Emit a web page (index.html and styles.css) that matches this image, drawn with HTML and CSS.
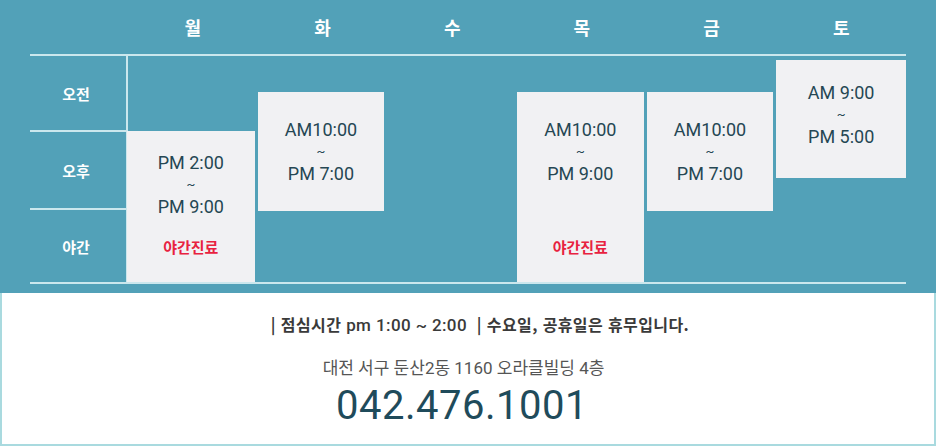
FILE: index.html
```html
<!DOCTYPE html>
<html lang="ko">

<head>
    <meta charset="UTF-8">
    <meta name="viewport" content="width=device-width, initial-scale=1.0">
    <title>진료시간 안내</title>
    <link rel="stylesheet" href="styles.css">
</head>

<body>
    <section class="timetable">
        <div class="days">
            <div></div>
            <div>월</div>
            <div>화</div>
            <div>수</div>
            <div>목</div>
            <div>금</div>
            <div>토</div>
        </div>

        <div class="grid">
            <div class="labels">
                <div class="label am">오전</div>
                <div class="label pm">오후</div>
                <div class="label night">야간</div>
            </div>

            <div class="day">
                <div class="slot mon">
                    <span>PM 2:00</span>
                    <span class="tilde">~</span>
                    <span>PM 9:00</span>
                    <span class="late">야간진료</span>
                </div>
            </div>
            <div class="day">
                <div class="slot tue">
                    <span>AM10:00</span>
                    <span class="tilde">~</span>
                    <span>PM 7:00</span>
                </div>
            </div>
            <div class="day"></div>
            <div class="day">
                <div class="slot thu">
                    <span>AM10:00</span>
                    <span class="tilde">~</span>
                    <span>PM 9:00</span>
                    <span class="late">야간진료</span>
                </div>
            </div>
            <div class="day">
                <div class="slot fri">
                    <span>AM10:00</span>
                    <span class="tilde">~</span>
                    <span>PM 7:00</span>
                </div>
            </div>
            <div class="day">
                <div class="slot sat">
                    <span>AM 9:00</span>
                    <span class="tilde">~</span>
                    <span>PM 5:00</span>
                </div>
            </div>
        </div>
    </section>

    <section class="info">
        <p class="notice">| 점심시간 <span class="time">pm 1:00 ~ 2:00</span> &nbsp;| 수요일, 공휴일은 휴무입니다.</p>
        <p class="address">대전 서구 둔산2동 1160 오라클빌딩 4층</p>
        <p class="phone">042.476.1001</p>
    </section>
</body>

</html>
```

FILE: styles.css
```css
body {
    margin: 0;
    padding: 0;
    font-family: Roboto, "Noto Sans CJK KR", sans-serif;
    background: #fff;
    color: #333;
}

.timetable {
    background: #52a1b8;
    padding: 0 30px 9px 30px;
}

.days,
.grid {
    display: grid;
    grid-template-columns: 98px repeat(6, 1fr);
}

.days {
    height: 54px;
    border-bottom: 2px solid #cbe7ed;
}

.days div {
    display: flex;
    align-items: center;
    justify-content: center;
    color: #fff;
    font-family: "Noto Sans CJK KR", sans-serif;
    font-weight: bold;
    font-size: 18px;
}

.grid {
    height: 226px;
    border-bottom: 2px solid #cbe7ed;
}

.labels {
    display: flex;
    flex-direction: column;
    border-right: 2px solid #cbe7ed;
}

.label {
    display: flex;
    align-items: center;
    justify-content: center;
    padding-right: 4px;
    color: #fff;
    font-family: "Noto Sans CJK KR", sans-serif;
    font-weight: bold;
    font-size: 15px;
}

.label.am {
    height: 74px;
    border-bottom: 2px solid #cbe7ed;
}

.label.pm {
    height: 76px;
    border-bottom: 2px solid #cbe7ed;
}

.label.night {
    flex: 1;
}

.day {
    display: flex;
    flex-direction: column;
}

.slot {
    display: flex;
    flex-direction: column;
    align-items: center;
    width: calc(100% - 3px);
    box-sizing: border-box;
    background: #f1f1f3;
    color: #254753;
    font-size: 18px;
    line-height: 22px;
}

.slot span {
    display: block;
}

.slot .tilde {
    font-size: 13px;
}

.slot .late {
    margin-top: auto;
    padding-bottom: 24px;
    color: #e8223f;
    font-family: "Noto Sans CJK KR", sans-serif;
    font-weight: bold;
    font-size: 15px;
}

.slot.mon {
    margin-top: 75px;
    margin-left: -1px;
    width: calc(100% - 2px);
    height: 151px;
    padding-top: 21px;
}

.slot.tue,
.slot.fri {
    margin-top: 36px;
    height: 119px;
    padding-top: 27px;
}

.slot.thu {
    margin-top: 36px;
    height: 190px;
    padding-top: 27px;
}

.slot.sat {
    margin-top: 4px;
    width: 100%;
    height: 118px;
    padding-top: 22px;
}

.info {
    height: 153px;
    box-sizing: border-box;
    border: 2px solid #a9dadf;
    border-top: none;
    padding-top: 21px;
    text-align: center;
}

.info p {
    margin: 0;
}

.notice {
    padding-left: 24px;
    font-family: "Noto Sans CJK KR", sans-serif;
    font-weight: bold;
    font-size: 16px;
    line-height: 20px;
    letter-spacing: 0.4px;
    color: #3a3a3a;
}

.notice .time {
    font-family: Roboto, sans-serif;
    font-weight: 500;
    font-size: 17px;
}

.address {
    margin-top: 22px !important;
    padding-right: 9px;
    font-size: 17px;
    line-height: 22px;
    color: #555;
}

.phone {
    margin-top: 5px !important;
    padding-right: 12px;
    font-size: 40px;
    line-height: 44px;
    font-weight: 400;
    letter-spacing: 0.5px;
    color: #1f4b5b;
}
```
